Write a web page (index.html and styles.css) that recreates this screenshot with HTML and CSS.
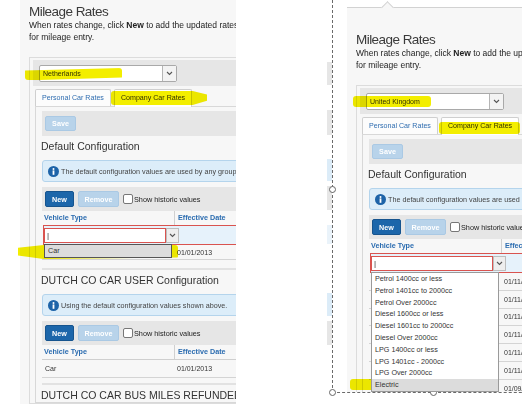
FILE: index.html
```html
<!DOCTYPE html>
<html lang="en">
<head>
    <meta charset="UTF-8">
    <title>Mileage Rates</title>
    <link rel="stylesheet" href="styles.css">
</head>
<body>

<div class="page">
    <!-- Left capture: Netherlands -->
    <div class="shot-left">
        <div class="screen">
            <h1 class="title">Mileage Rates</h1>
            <p class="desc">When rates change, click <b>New</b> to add the updated rates<br>for mileage entry.</p>

            <div class="box">
                <div class="bar">
                    <div class="select">
                        <span class="select-text">Netherlands</span>
                        <span class="select-arrow"><svg width="7" height="5" viewBox="0 0 7 5"><path d="M1 1l2.5 2.5L6 1" fill="none" stroke="#555" stroke-width="1.1"/></svg></span>
                    </div>
                </div>

                <div class="tabs-area">
                    <div class="tabs">
                        <div class="tab">Personal Car Rates</div>
                        <div class="tab tab--active">Company Car Rates</div>
                    </div>
                    <div class="panel">
                        <div class="savebar"><button class="btn btn--save">Save</button></div>

                        <h3 class="section-title">Default Configuration</h3>
                        <div class="info">
                            <svg class="info-icon" width="11" height="11" viewBox="0 0 11 11"><circle cx="5.5" cy="5.5" r="5.5" fill="#1d63a8"/><rect x="4.6" y="4.4" width="1.8" height="4.4" fill="#fff"/><circle cx="5.5" cy="2.9" r="1" fill="#fff"/></svg>
                            The default configuration values are used by any group that does not have its own values.
                        </div>
                        <div class="toolbar">
                            <button class="btn btn--new">New</button>
                            <button class="btn btn--remove">Remove</button>
                            <label class="check"><span class="check-box"></span>Show historic values</label>
                        </div>
                        <div class="grid-head">
                            <div class="col-type">Vehicle Type</div>
                            <div class="col-date">Effective Date</div>
                        </div>
                        <div class="edit-row">
                            <div class="combo-input">|</div>
                            <div class="combo-arrow"><svg width="7" height="5" viewBox="0 0 7 5"><path d="M1 1l2.5 2.5L6 1" fill="none" stroke="#555" stroke-width="1.1"/></svg></div>
                            <div class="dropdown dropdown--dark">
                                <div class="dropdown-item dropdown-item--hl">Car</div>
                            </div>
                        </div>
                        <div class="grid-row">
                            <div class="col-type"></div>
                            <div class="col-date">01/01/2013</div>
                        </div>

                        <div class="sep"></div>

                        <h3 class="section-title">DUTCH CO CAR USER Configuration</h3>
                        <div class="info">
                            <svg class="info-icon" width="11" height="11" viewBox="0 0 11 11"><circle cx="5.5" cy="5.5" r="5.5" fill="#1d63a8"/><rect x="4.6" y="4.4" width="1.8" height="4.4" fill="#fff"/><circle cx="5.5" cy="2.9" r="1" fill="#fff"/></svg>
                            Using the default configuration values shown above.
                        </div>
                        <div class="toolbar">
                            <button class="btn btn--new">New</button>
                            <button class="btn btn--remove">Remove</button>
                            <label class="check"><span class="check-box"></span>Show historic values</label>
                        </div>
                        <div class="grid-head grid-head--lined">
                            <div class="col-type">Vehicle Type</div>
                            <div class="col-date">Effective Date</div>
                        </div>
                        <div class="grid-row grid-row--tall">
                            <div class="col-type">Car</div>
                            <div class="col-date">01/01/2013</div>
                        </div>

                        <div class="sep sep--tight"></div>

                        <h3 class="section-title">DUTCH CO CAR BUS MILES REFUNDED Configuration</h3>
                    </div>
                </div>
            </div>
        </div>
    </div>

    <div class="gap"></div>

    <!-- bits of the capture underneath the selection -->
    <div class="sliver">
        <div class="patch" style="margin-top:62px;height:23px"></div>
        <div class="patch" style="margin-top:25px;height:25px"></div>
        <div class="patch patch--blue" style="margin-top:24px;height:22px"></div>
        <div class="patch" style="margin-top:5px;height:24px"></div>
        <div class="patch patch--pale" style="margin-top:15px;height:19px"></div>
        <div class="patch patch--blue" style="margin-top:49px;height:23px"></div>
        <div class="patch" style="margin-top:5px;height:24px"></div>
    </div>

    <!-- Right capture: United Kingdom, inside a selection frame -->
    <div class="selection">
        <div class="screen screen--popup">
            <h1 class="title">Mileage Rates</h1>
            <p class="desc">When rates change, click <b>New</b> to add the updated rates<br>for mileage entry.</p>

            <div class="box">
                <div class="bar">
                    <div class="select">
                        <span class="select-text">United Kingdom</span>
                        <span class="select-arrow"><svg width="7" height="5" viewBox="0 0 7 5"><path d="M1 1l2.5 2.5L6 1" fill="none" stroke="#555" stroke-width="1.1"/></svg></span>
                    </div>
                </div>

                <div class="tabs-area">
                    <div class="tabs">
                        <div class="tab">Personal Car Rates</div>
                        <div class="tab tab--active">Company Car Rates</div>
                    </div>
                    <div class="panel">
                        <div class="savebar"><button class="btn btn--save">Save</button></div>

                        <h3 class="section-title">Default Configuration</h3>
                        <div class="info">
                            <svg class="info-icon" width="11" height="11" viewBox="0 0 11 11"><circle cx="5.5" cy="5.5" r="5.5" fill="#1d63a8"/><rect x="4.6" y="4.4" width="1.8" height="4.4" fill="#fff"/><circle cx="5.5" cy="2.9" r="1" fill="#fff"/></svg>
                            The default configuration values are used by any group that does not have its own values.
                        </div>
                        <div class="toolbar">
                            <button class="btn btn--new">New</button>
                            <button class="btn btn--remove">Remove</button>
                            <label class="check"><span class="check-box"></span>Show historic values</label>
                        </div>
                        <div class="grid-head">
                            <div class="col-type">Vehicle Type</div>
                            <div class="col-date">Effective Date</div>
                        </div>
                        <div class="edit-row">
                            <div class="combo-input">|</div>
                            <div class="combo-arrow"><svg width="7" height="5" viewBox="0 0 7 5"><path d="M1 1l2.5 2.5L6 1" fill="none" stroke="#555" stroke-width="1.1"/></svg></div>
                            <div class="dropdown">
                                <div class="dropdown-item">Petrol 1400cc or less</div>
                                <div class="dropdown-item">Petrol 1401cc to 2000cc</div>
                                <div class="dropdown-item">Petrol Over 2000cc</div>
                                <div class="dropdown-item">Diesel 1600cc or less</div>
                                <div class="dropdown-item">Diesel 1601cc to 2000cc</div>
                                <div class="dropdown-item">Diesel Over 2000cc</div>
                                <div class="dropdown-item">LPG 1400cc or less</div>
                                <div class="dropdown-item">LPG 1401cc - 2000cc</div>
                                <div class="dropdown-item">LPG Over 2000cc</div>
                                <div class="dropdown-item dropdown-item--hl">Electric</div>
                            </div>
                        </div>
                        <div class="grid-row grid-row--uk"><div class="col-type"></div><div class="col-date">01/11/2014</div></div>
                        <div class="grid-row grid-row--uk"><div class="col-type"></div><div class="col-date">01/11/2014</div></div>
                        <div class="grid-row grid-row--uk"><div class="col-type"></div><div class="col-date">01/11/2014</div></div>
                        <div class="grid-row grid-row--uk"><div class="col-type"></div><div class="col-date">01/11/2014</div></div>
                        <div class="grid-row grid-row--uk"><div class="col-type"></div><div class="col-date">01/11/2014</div></div>
                        <div class="grid-row grid-row--uk"><div class="col-type"></div><div class="col-date">01/11/2014</div></div>
                        <div class="grid-row grid-row--uk"><div class="col-type"></div><div class="col-date">01/09/2014</div></div>
                    </div>
                </div>
            </div>
        </div>
    </div>

    <!-- selection handles -->
    <span class="handle" style="left:329px;top:186px"></span>
    <span class="handle" style="left:329px;top:389px"></span>
    <span class="handle" style="left:430px;top:389px"></span>

    <!-- highlighter marks -->
    <span class="hl hl--nl"></span>
    <span class="hl hl--tab-l"></span>
    <span class="hl hl--car"></span>
    <span class="hl hl--uk"></span>
    <span class="hl hl--tab-r"></span>
    <span class="hl hl--elec"></span>
</div>

</body>
</html>
```

FILE: styles.css
```css
body {
    margin: 0;
    background: #fff;
    font-family: "Liberation Sans", Arial, sans-serif;
}

.page {
    position: relative;
    display: flex;
    width: 522px;
    height: 404px;
    overflow: hidden;
}

.shot-left {
    flex: none;
    width: 216px;
    margin-left: 20px;
    overflow: hidden;
}

.gap {
    flex: none;
    width: 91px;
}

.sliver {
    flex: none;
    width: 5px;
    display: flex;
    flex-direction: column;
}

.patch {
    flex: none;
    background: #e6e6e6;
}

.patch--blue {
    background: #dcecf8;
}

.patch--pale {
    background: #eaf3fa;
}

.selection {
    flex: none;
    width: 190px;
    height: 392px;
    padding-left: 14px;
    border-left: 1px dashed #6a6a6a;
    border-bottom: 1px dashed #6a6a6a;
    overflow: hidden;
}

.screen {
    width: 420px;
    min-height: 404px;
    box-sizing: border-box;
    padding: 5px 0 0 9px;
    background: #f7f7f7;
}

.screen--popup {
    position: relative;
    margin-top: 7px;
    padding-top: 25px;
    border-top: 1px solid #d2d2d2;
}

.screen--popup::before {
    content: "";
    position: absolute;
    top: -5px;
    left: 36px;
    width: 8px;
    height: 8px;
    background: #f7f7f7;
    border-top: 1px solid #d2d2d2;
    border-left: 1px solid #d2d2d2;
    transform: rotate(45deg);
}

.title {
    margin: 0;
    font-size: 13.5px;
    line-height: 14px;
    font-weight: normal;
    letter-spacing: -0.55px;
    color: #3a3a3a;
}

.desc {
    margin: 0;
    font-size: 8.5px;
    line-height: 12px;
    color: #222;
    white-space: nowrap;
}

.box {
    margin-top: 14px;
    padding: 2px 0 0 3px;
    border: 1px solid #dcdcdc;
    border-right: 0;
}

.bar {
    padding: 5px 6px 4px;
    background: #e6e6e6;
}

.select {
    display: flex;
    align-items: center;
    width: 138px;
    height: 17px;
    box-sizing: border-box;
    border: 1px solid #a9a9a9;
    border-radius: 2px;
    background: #fff;
    font-size: 7px;
    color: #333;
}

.select-text {
    flex: 1;
    padding-left: 3px;
}

.select-arrow {
    align-self: stretch;
    width: 13px;
    display: flex;
    align-items: center;
    justify-content: center;
    border-left: 1px solid #b5b5b5;
    background: #f3f3f3;
}

.tabs-area {
    margin: 3px 0 0 2px;
}

.tabs {
    display: flex;
    gap: 3px;
}

.tab {
    height: 17px;
    box-sizing: border-box;
    padding: 0 6px;
    border: 1px solid #cfcfcf;
    border-bottom: 0;
    border-radius: 2px 2px 0 0;
    background: #fcfcfc;
    font-size: 7.1px;
    line-height: 16px;
    color: #2f6db0;
    white-space: nowrap;
}

.tab--active {
    position: relative;
    height: 18px;
    margin-bottom: -1px;
    background: #fff;
    color: #333;
}

.panel {
    padding: 4px 0 0 6px;
    border: 1px solid #d8d8d8;
    border-right: 0;
}

.savebar {
    padding: 5px 3px;
    background: #e6e6e6;
    display: flex;
}

.btn {
    padding: 0;
    height: 16px;
    box-sizing: border-box;
    border: 1px solid;
    border-radius: 2px;
    font-family: "Liberation Sans", Arial, sans-serif;
    font-size: 7.2px;
    font-weight: bold;
    color: #fff;
}

.btn--save {
    width: 31px;
    height: 15px;
    background: #b8d3ea;
    border-color: #aac9e4;
}

.btn--new {
    width: 29px;
    background: #1c66aa;
    border-color: #16548e;
}

.btn--remove {
    width: 41px;
    background: #b8d3ea;
    border-color: #aac9e4;
}

.section-title {
    margin: 3px 0 0 -1px;
    font-size: 10.5px;
    line-height: 14px;
    font-weight: normal;
    color: #333;
    white-space: nowrap;
}

.info {
    display: flex;
    align-items: center;
    gap: 2px;
    height: 22px;
    margin-top: 7px;
    padding-left: 5px;
    box-sizing: border-box;
    border: 1px solid #b4d4ec;
    border-radius: 3px;
    background: #dcedf9;
    font-size: 7.2px;
    color: #444;
    white-space: nowrap;
}

.info-icon {
    flex: none;
}

.toolbar {
    display: flex;
    align-items: center;
    gap: 4px;
    height: 24px;
    margin-top: 5px;
    padding-left: 3px;
    background: #e6e6e6;
}

.check {
    display: flex;
    align-items: center;
    gap: 1px;
    font-size: 7.3px;
    color: #222;
    white-space: nowrap;
}

.check-box {
    width: 10px;
    height: 10px;
    box-sizing: border-box;
    border: 1px solid #777;
    border-radius: 2px;
    background: #fff;
}

.col-type {
    flex: none;
    width: 132px;
    box-sizing: border-box;
    padding-left: 2px;
}

.col-date {
    flex: 1;
    padding-left: 3px;
    white-space: nowrap;
}

.grid-head {
    display: flex;
    height: 14px;
    line-height: 14px;
    font-size: 7.2px;
    font-weight: bold;
    color: #2b6cb0;
}

.grid-head .col-date {
    border-left: 1px solid #d0d0d0;
}

.grid-head--lined {
    border-bottom: 1px solid #cfcfcf;
}

.edit-row {
    position: relative;
    display: flex;
    height: 20px;
    box-sizing: border-box;
    margin-left: 1px;
    padding-top: 2px;
    border: 1px solid #d9534f;
    background: #e6f2fb;
}

.combo-input {
    width: 122px;
    height: 15px;
    box-sizing: border-box;
    padding-left: 2px;
    border: 1px solid #d9534f;
    background: #fff;
    font-size: 8px;
    line-height: 13px;
    color: #333;
}

.combo-arrow {
    width: 13px;
    height: 15px;
    box-sizing: border-box;
    display: flex;
    align-items: center;
    justify-content: center;
    border: 1px solid #bdbdbd;
    background: #eee;
}

.dropdown {
    position: absolute;
    top: 100%;
    left: 0;
    z-index: 2;
    width: 128px;
    box-sizing: border-box;
    border: 1px solid #9a9a9a;
    background: #fff;
    font-size: 7.2px;
    color: #333;
}

.dropdown--dark {
    border-color: #555;
}

.dropdown-item {
    height: 11.8px;
    line-height: 11.8px;
    padding-left: 3px;
    white-space: nowrap;
}

.dropdown-item--hl {
    background: #dcdcdc;
}

.grid-row {
    display: flex;
    align-items: center;
    height: 15px;
    box-sizing: border-box;
    border-bottom: 1px solid #d4d4d4;
    font-size: 7px;
    color: #333;
}

.grid-row .col-type {
    padding-left: 3px;
}

.grid-row--tall {
    height: 18px;
}

.grid-row--uk {
    height: 17.8px;
}

.sep {
    height: 2px;
    margin-top: 8px;
    background: #e2e2e2;
}

.sep--tight {
    margin-top: 5px;
}

.handle {
    position: absolute;
    width: 5px;
    height: 5px;
    border: 1px solid #666;
    border-radius: 50%;
    background: #fff;
}

.hl {
    position: absolute;
    background: #f3ee00;
    mix-blend-mode: multiply;
    border-radius: 3px;
}

.hl--nl {
    left: 25px;
    top: 68px;
    width: 97px;
    height: 12px;
    clip-path: polygon(0 20%, 100% 0, 100% 80%, 15% 100%, 0 100%);
}

.hl--tab-l {
    left: 111px;
    top: 91px;
    width: 96px;
    height: 14px;
    clip-path: polygon(0 0, 85% 0, 100% 25%, 100% 70%, 85% 100%, 0 100%);
}

.hl--car {
    left: 18px;
    top: 245px;
    width: 160px;
    height: 14px;
    clip-path: polygon(0 20%, 16% 0, 100% 0, 100% 90%, 16% 100%, 0 75%);
}

.hl--uk {
    left: 353px;
    top: 96px;
    width: 78px;
    height: 11px;
}

.hl--tab-r {
    left: 439px;
    top: 122px;
    width: 81px;
    height: 12px;
}

.hl--elec {
    left: 350px;
    top: 379px;
    width: 130px;
    height: 11px;
}
```
